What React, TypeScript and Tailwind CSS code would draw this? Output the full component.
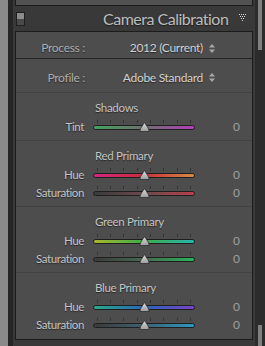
import React from 'react'

type Row = { label: string; from: string; to: string; mid?: string }
type Section = { title: string; rows: Row[] }

const sections: Section[] = [
  { title: 'Shadows', rows: [{ label: 'Tint', from: '#3fa45c', mid: '#6f6f6f', to: '#b23fb8' }] },
  {
    title: 'Red Primary',
    rows: [
      { label: 'Hue', from: '#d4247e', mid: '#c8303a', to: '#d58a44' },
      { label: 'Saturation', from: '#3a3a3a', mid: '#6a4a4c', to: '#b8404c' },
    ],
  },
  {
    title: 'Green Primary',
    rows: [
      { label: 'Hue', from: '#a8b82a', mid: '#3aae4a', to: '#2ab4b0' },
      { label: 'Saturation', from: '#3a3a3a', mid: '#466a50', to: '#26b45a' },
    ],
  },
  {
    title: 'Blue Primary',
    rows: [
      { label: 'Hue', from: '#27aa86', mid: '#2a66b8', to: '#7a44c8' },
      { label: 'Saturation', from: '#3a3a3a', mid: '#3e6270', to: '#2a98c0' },
    ],
  },
]

const ticks = [4, 17, 30, 44, 57, 70, 84, 97]

function Thumb() {
  return (
    <svg width="11" height="10" viewBox="0 0 11 10" className="absolute left-[46px] top-[-3px]">
      <defs>
        <linearGradient id="tg" x1="0" y1="0" x2="0" y2="1">
          <stop offset="0" stopColor="#dcdcdc" />
          <stop offset="1" stopColor="#9c9c9c" />
        </linearGradient>
      </defs>
      <path d="M5.5 0.5 L8.6 5.2 Q10.3 7.4 10 9.5 L1 9.5 Q0.7 7.4 2.4 5.2 Z" fill="url(#tg)" stroke="#2e2e2e" strokeWidth="0.8" />
    </svg>
  )
}

function Slider({ row }: { row: Row }) {
  const bg = `linear-gradient(to right, ${row.from}, ${row.mid}, ${row.to})`
  return (
    <div className="flex h-[18px] items-center">
      <div className="w-[68px] text-right text-[11.5px] tracking-[-0.4px] text-[#c4c4c4] [text-shadow:0_1px_1px_#262626]">{row.label}</div>
      <div className="relative ml-[9px] h-[5px] w-[102px]">
        {ticks.map((t) => (
          <div key={t} className="absolute top-[-5px] h-[3px] w-px bg-[#333]" style={{ left: t }} />
        ))}
        <div className="h-[5px] w-full rounded-full border border-[#1f1f1f]" style={{ background: bg }} />
        <Thumb />
      </div>
      <div className="flex-1 pr-[12px] text-right text-[12px] text-[#9e9e9e]">0</div>
    </div>
  )
}

function UpDown() {
  return (
    <svg width="6" height="9" viewBox="0 0 6 9" className="ml-[6px]">
      <path d="M3 0 L6 3.5 L0 3.5 Z M0 5.5 L6 5.5 L3 9 Z" fill="#a8a8a8" />
    </svg>
  )
}

function Dots() {
  const pts: [number, number][] = [
    [0, 0], [2, 0], [4, 0], [6, 0],
    [1, 2], [3, 2], [5, 2],
    [2, 4], [4, 4],
    [3, 6],
  ]
  return (
    <svg width="7" height="7" viewBox="0 0 7 7">
      {pts.map(([x, y]) => (
        <rect key={`${x}-${y}`} x={x} y={y} width="1" height="1" fill="#d4d4d4" />
      ))}
    </svg>
  )
}

export default function App() {
  return (
    <div className="flex h-[346px] w-[265px] overflow-hidden bg-[#2c2c2c] font-['Lato','Liberation_Sans',sans-serif]">
      <div className="w-[8px] shrink-0 bg-[#8a8a8a]" />
      <div className="w-[5px] shrink-0 bg-[#262626]" />
      <div className="flex w-[242px] shrink-0 flex-col bg-[#393939]">
        <div className="mx-[2px] h-[6px] border-x border-b border-[#1c1c1c] bg-[#525252]" />
        {/* header */}
        <div className="flex h-[25px] items-center">
          <div className="ml-[3px] flex h-[14px] w-[9px] flex-col overflow-hidden border border-[#1e1e1e]">
            <div className="h-1/2 bg-[#8c8c8c]" />
            <div className="h-1/2 bg-[#4a4a4a]" />
          </div>
          <div className="ml-[78px] text-[16px] leading-none tracking-[-0.5px] text-[#bdbdbd] [text-shadow:0_1px_1px_#1e1e1e]">Camera Calibration</div>
          <div className="mb-[2px] ml-auto mr-[9px]">
            <Dots />
          </div>
        </div>
        {/* body */}
        <div className="mx-[2px] flex h-[309px] flex-col border border-[#1c1c1c] bg-[#4d4d4d]">
          <div className="flex h-[26px] shrink-0 items-center pt-[6px] text-[12px] tracking-[-0.3px]">
            <div className="w-[69px] text-right text-[#adadad] [text-shadow:0_1px_1px_#2a2a2a]">Process :</div>
            <div className="flex-1 text-right text-[#d2d2d2] [text-shadow:0_1px_1px_#2a2a2a]">2012 (Current)</div>
            <UpDown />
            <div className="w-[37px]" />
          </div>
          <div className="h-px shrink-0 bg-[#262626]" />
          <div className="flex h-[33px] shrink-0 items-center pt-[4px] text-[12px] tracking-[-0.3px]">
            <div className="w-[69px] text-right text-[#adadad] [text-shadow:0_1px_1px_#2a2a2a]">Profile :</div>
            <div className="flex-1 text-right text-[#d2d2d2] [text-shadow:0_1px_1px_#2a2a2a]">Adobe Standard</div>
            <UpDown />
            <div className="w-[37px]" />
          </div>
          {sections.map((s) => (
            <div key={s.title} className="shrink-0 border-t border-[#424242] pb-[4px] pt-[8px]">
              <div className="mb-[3px] h-[14px] pl-[79px] text-[11.5px] leading-[14px] tracking-[-0.3px] text-[#c4c4c4] [text-shadow:0_1px_1px_#262626]">{s.title}</div>
              {s.rows.map((r) => (
                <Slider key={r.label} row={r} />
              ))}
            </div>
          ))}
        </div>
      </div>
      <div className="w-[3px] shrink-0 bg-[#2c2c2c]" />
      <div className="flex w-[4px] shrink-0 flex-col">
        <div className="h-[50px] bg-[#808080]" />
        <div className="flex-1 bg-[#2c2c2c]" />
        <div className="h-[21px] bg-[#808080]" />
      </div>
    </div>
  )
}
